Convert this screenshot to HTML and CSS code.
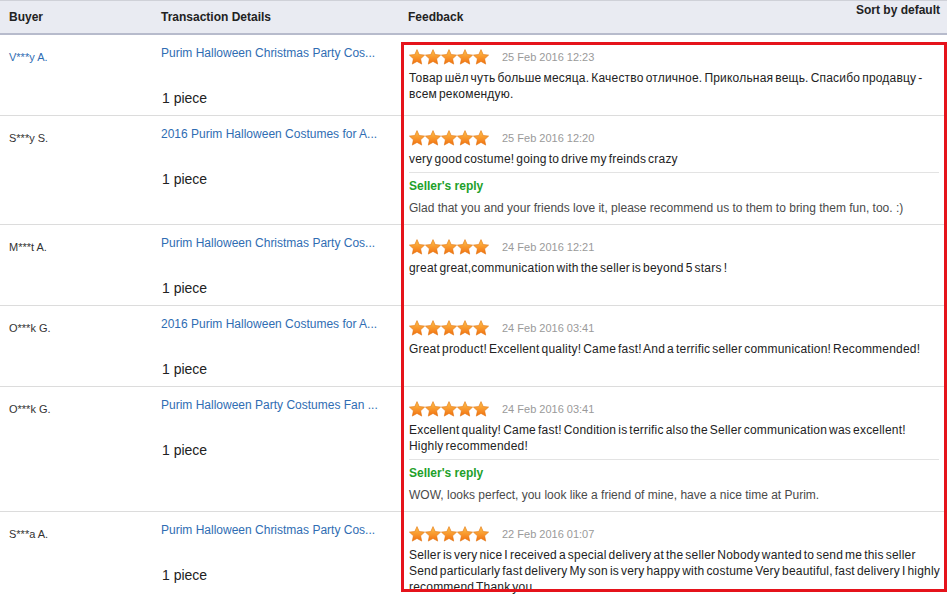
FILE: index.html
```html
<!DOCTYPE html>
<html lang="en">
<head>
    <meta charset="UTF-8">
    <meta name="viewport" content="width=device-width, initial-scale=1.0">
    <title>Buyer feedback</title>
    <link rel="stylesheet" href="styles.css">
</head>
<body>
    <!-- star shape reused by every rating -->
    <svg class="defs" width="0" height="0">
        <defs>
            <linearGradient id="starFill" x1="0" y1="0" x2="0" y2="1">
                <stop offset="0" stop-color="#ffc24d"/>
                <stop offset="1" stop-color="#f2700f"/>
            </linearGradient>
            <symbol id="star" viewBox="0 0 16 16">
                <polygon points="8,0.6 10.2,5.5 15.6,6.1 11.6,9.8 12.7,15.1 8,12.4 3.3,15.1 4.4,9.8 0.4,6.1 5.8,5.5" fill="url(#starFill)" stroke="#e0740f" stroke-width="0.6" stroke-linejoin="round"/>
            </symbol>
        </defs>
    </svg>

    <div class="feedback-table">
        <div class="head">
            <div>Buyer</div>
            <div>Transaction Details</div>
            <div>Feedback</div>
            <div class="sort">Sort by default</div>
        </div>

        <div class="row">
            <div class="buyer"><a href="#">V***y A.</a></div>
            <div class="order">
                <a href="#">Purim Halloween Christmas Party Cos...</a>
                <div class="qty">1 piece</div>
            </div>
            <div class="feedback">
                <div class="rating">
                    <svg class="stars" width="80" height="16"><use href="#star" x="0" width="16" height="16"/><use href="#star" x="16" width="16" height="16"/><use href="#star" x="32" width="16" height="16"/><use href="#star" x="48" width="16" height="16"/><use href="#star" x="64" width="16" height="16"/></svg>
                    <span class="date">25 Feb 2016 12:23</span>
                </div>
                <p class="text">Товар шёл чуть больше месяца. Качество отличное. Прикольная вещь. Спасибо продавцу - всем рекомендую.</p>
            </div>
        </div>

        <div class="row">
            <div class="buyer">S***y S.</div>
            <div class="order">
                <a href="#">2016 Purim Halloween Costumes for A...</a>
                <div class="qty">1 piece</div>
            </div>
            <div class="feedback">
                <div class="rating">
                    <svg class="stars" width="80" height="16"><use href="#star" x="0" width="16" height="16"/><use href="#star" x="16" width="16" height="16"/><use href="#star" x="32" width="16" height="16"/><use href="#star" x="48" width="16" height="16"/><use href="#star" x="64" width="16" height="16"/></svg>
                    <span class="date">25 Feb 2016 12:20</span>
                </div>
                <p class="text">very good costume! going to drive my freinds crazy</p>
                <div class="reply">
                    <h4>Seller's reply</h4>
                    <p>Glad that you and your friends love it, please recommend us to them to bring them fun, too. :)</p>
                </div>
            </div>
        </div>

        <div class="row">
            <div class="buyer">M***t A.</div>
            <div class="order">
                <a href="#">Purim Halloween Christmas Party Cos...</a>
                <div class="qty">1 piece</div>
            </div>
            <div class="feedback">
                <div class="rating">
                    <svg class="stars" width="80" height="16"><use href="#star" x="0" width="16" height="16"/><use href="#star" x="16" width="16" height="16"/><use href="#star" x="32" width="16" height="16"/><use href="#star" x="48" width="16" height="16"/><use href="#star" x="64" width="16" height="16"/></svg>
                    <span class="date">24 Feb 2016 12:21</span>
                </div>
                <p class="text">great great,communication with the seller is beyond 5 stars !</p>
            </div>
        </div>

        <div class="row">
            <div class="buyer">O***k G.</div>
            <div class="order">
                <a href="#">2016 Purim Halloween Costumes for A...</a>
                <div class="qty">1 piece</div>
            </div>
            <div class="feedback">
                <div class="rating">
                    <svg class="stars" width="80" height="16"><use href="#star" x="0" width="16" height="16"/><use href="#star" x="16" width="16" height="16"/><use href="#star" x="32" width="16" height="16"/><use href="#star" x="48" width="16" height="16"/><use href="#star" x="64" width="16" height="16"/></svg>
                    <span class="date">24 Feb 2016 03:41</span>
                </div>
                <p class="text">Great product! Excellent quality! Came fast! And a terrific seller communication! Recommended!</p>
            </div>
        </div>

        <div class="row">
            <div class="buyer">O***k G.</div>
            <div class="order">
                <a href="#">Purim Halloween Party Costumes Fan ...</a>
                <div class="qty">1 piece</div>
            </div>
            <div class="feedback">
                <div class="rating">
                    <svg class="stars" width="80" height="16"><use href="#star" x="0" width="16" height="16"/><use href="#star" x="16" width="16" height="16"/><use href="#star" x="32" width="16" height="16"/><use href="#star" x="48" width="16" height="16"/><use href="#star" x="64" width="16" height="16"/></svg>
                    <span class="date">24 Feb 2016 03:41</span>
                </div>
                <p class="text">Excellent quality! Came fast! Condition is terrific also the Seller communication was excellent! Highly recommended!</p>
                <div class="reply">
                    <h4>Seller's reply</h4>
                    <p>WOW, looks perfect, you look like a friend of mine, have a nice time at Purim.</p>
                </div>
            </div>
        </div>

        <div class="row">
            <div class="buyer">S***a A.</div>
            <div class="order">
                <a href="#">Purim Halloween Christmas Party Cos...</a>
                <div class="qty">1 piece</div>
            </div>
            <div class="feedback">
                <div class="rating">
                    <svg class="stars" width="80" height="16"><use href="#star" x="0" width="16" height="16"/><use href="#star" x="16" width="16" height="16"/><use href="#star" x="32" width="16" height="16"/><use href="#star" x="48" width="16" height="16"/><use href="#star" x="64" width="16" height="16"/></svg>
                    <span class="date">22 Feb 2016 01:07</span>
                </div>
                <p class="text">Seller is very nice I received a special delivery at the seller Nobody wanted to send me this seller Send particularly fast delivery My son is very happy with costume Very beautiful, fast delivery I highly recommend Thank you.</p>
            </div>
        </div>

        <!-- red frame marking the feedback column -->
        <div class="highlight"></div>
    </div>
</body>
</html>
```

FILE: styles.css
```css
body {
    margin: 0;
    padding: 0;
    background-color: #fff;
    font-family: "Liberation Sans", Arial, sans-serif;
    color: #222;
    overflow: hidden;
}
.defs {
    position: absolute;
    width: 0;
    height: 0;
}
a {
    color: #2f6db3;
    text-decoration: none;
}
.feedback-table {
    position: relative;
    width: 947px;
}
.head {
    display: grid;
    grid-template-columns: 152px 248px 1fr auto;
    height: 32px;
    background-color: #e9ebf2;
    border-top: 1px solid #cfd1d8;
    border-bottom: 2px solid #b7bbcc;
    font-size: 12px;
    font-weight: bold;
    color: #222;
}
.head div {
    padding-left: 9px;
    line-height: 32px;
}
.head div:nth-child(3) {
    padding-left: 8px;
}
.head .sort {
    line-height: 16px;
    padding: 1px 7px 0 0;
}
.row {
    display: grid;
    grid-template-columns: 152px 248px 1fr;
    border-bottom: 1px solid #dcdcdc;
}
.buyer {
    padding: 14px 0 0 9px;
    font-size: 11px;
    line-height: 16px;
    color: #333;
}
.order {
    padding: 10px 0 8px 9px;
}
.order a {
    display: block;
    font-size: 12px;
    line-height: 16px;
}
.qty {
    margin-top: 28px;
    font-size: 14px;
    line-height: 18px;
    color: #222;
    padding-left: 1px;
}
.feedback {
    padding: 14px 5.5px 8px 9px;
}
.rating {
    display: flex;
    align-items: center;
    height: 16px;
    margin-bottom: 5px;
}
.stars {
    display: block;
}
.date {
    margin-left: 13px;
    font-size: 11px;
    color: #9a9a9a;
}
.text {
    margin: 0;
    font-size: 12px;
    line-height: 16px;
    letter-spacing: 0.2px;
    word-spacing: -1.5px;
    color: #222;
}
.reply {
    margin: 5px 3px 0 0;
    padding-top: 5px;
    border-top: 1px solid #e3e3e3;
}
.reply h4 {
    margin: 0;
    font-size: 12px;
    line-height: 16px;
    color: #22a02a;
}
.reply p {
    margin: 6px 0 0;
    font-size: 12px;
    line-height: 16px;
    color: #4a4a4a;
}
.highlight {
    position: absolute;
    left: 401px;
    top: 42px;
    width: 546px;
    height: 550px;
    box-sizing: border-box;
    border: 3px solid #e5131b;
    pointer-events: none;
}
```
